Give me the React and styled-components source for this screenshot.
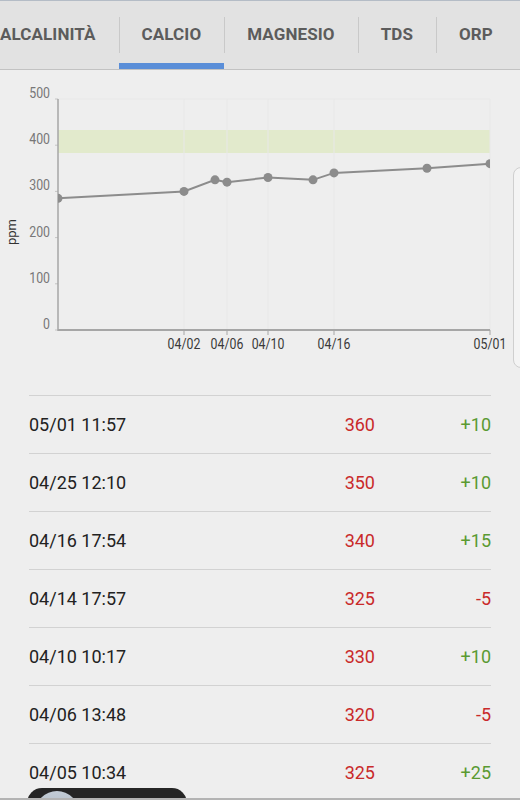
import React from "react";
import styled, { createGlobalStyle } from "styled-components";

const GlobalStyle = createGlobalStyle`
  html, body {
    margin: 0;
    padding: 0;
    overflow: hidden;
    background: #eeeeee;
    font-family: Roboto, "Liberation Sans", sans-serif;
  }
`;

const Screen = styled.div`
  position: relative;
  width: 520px;
  height: 800px;
  overflow: hidden;
  background: #eeeeee;
`;

const TabBar = styled.div`
  display: flex;
  height: 70px;
  box-sizing: border-box;
  background: #e2e2e2;
  border-top: 1px solid #b4bcc6;
  border-bottom: 1px solid #c2c2c2;
  overflow: hidden;
  margin-left: -23px;
`;

const Tab = styled.div`
  position: relative;
  flex: none;
  display: flex;
  align-items: center;
  justify-content: center;
  padding: 0 23px 2px;
  font-size: 17px;
  font-weight: 700;
  color: #5c5c5c;
  letter-spacing: 0.1px;

  &:not(:first-child)::before {
    content: "";
    position: absolute;
    left: 0;
    top: 16px;
    height: 36px;
    width: 1px;
    background: #c9c9c9;
  }

  &::after {
    content: "";
    position: absolute;
    left: 0;
    right: 0;
    bottom: 0;
    height: 6px;
    background: ${(p) => (p.$active ? "#5a8ed8" : "transparent")};
  }
`;

const ChartWrap = styled.div`
  height: 325px;
`;

const List = styled.div`
  padding: 0 29px;
`;

const Row = styled.div`
  display: grid;
  grid-template-columns: 1fr auto 116px;
  align-items: center;
  height: 57px;
  border-top: 1px solid #d2d2d2;
  font-size: 18px;
`;

const DateCell = styled.span`
  color: #222222;
`;

const Value = styled.span`
  color: #c92a2a;
  text-align: right;
`;

const Delta = styled.span`
  text-align: right;
  color: ${(p) => (p.$neg ? "#c92a2a" : "#5a9a32")};
`;

const ScrollHandle = styled.div`
  position: absolute;
  left: 513px;
  top: 167px;
  width: 20px;
  height: 199px;
  border: 1px solid #cfcfcf;
  border-radius: 8px;
  background: #f4f4f4;
`;

const Pill = styled.div`
  position: absolute;
  left: 27px;
  top: 788px;
  width: 160px;
  height: 30px;
  border-radius: 15px;
  background: #252525;
`;

const PillAvatar = styled.div`
  position: absolute;
  left: 8px;
  top: 3px;
  width: 44px;
  height: 44px;
  border-radius: 50%;
  background: linear-gradient(180deg, #c3ccd6, #9aa6b3);
`;

const BottomEdge = styled.div`
  position: absolute;
  left: 0;
  right: 0;
  top: 798px;
  height: 2px;
  background: #b3b3b3;
`;

const tabs = ["ALCALINITÀ", "CALCIO", "MAGNESIO", "TDS", "ORP"];

const rows = [
  ["05/01 11:57", "360", "+10"],
  ["04/25 12:10", "350", "+10"],
  ["04/16 17:54", "340", "+15"],
  ["04/14 17:57", "325", "-5"],
  ["04/10 10:17", "330", "+10"],
  ["04/06 13:48", "320", "-5"],
  ["04/05 10:34", "325", "+25"],
];

const X0 = 58;
const X1 = 490;
const yOf = (v) => 330 - v * 0.462;

const points = [
  [58, 285],
  [184, 300],
  [215, 325],
  [227, 320],
  [268, 330],
  [313, 325],
  [334, 340],
  [427, 350],
  [490, 360],
];

const xTicks = [
  [184, "04/02"],
  [227, "04/06"],
  [268, "04/10"],
  [334, "04/16"],
  [490, "05/01"],
];

const Chart = () => (
  <svg width="520" height="325" viewBox="0 70 520 325">
    <defs>
      <clipPath id="plot">
        <rect x={X0} y={95} width={X1 - X0} height={240} />
      </clipPath>
    </defs>
    <rect x={X0} y={130} width={X1 - X0} height={23} fill="#e2eacc" />
    <line x1={X0} y1={99} x2={X1} y2={99} stroke="#e8e8e8" strokeWidth="1" />
    {xTicks.map(([x]) => (
      <line key={x} x1={x} y1={99} x2={x} y2={330} stroke="#e8e8e8" strokeWidth="1" />
    ))}
    {[0, 100, 200, 300, 400, 500].map((v) => (
      <g key={v}>
        <line x1={55} y1={yOf(v)} x2={X0} y2={yOf(v)} stroke="#c4c4c4" strokeWidth="1" />
        <text
          x={50}
          y={yOf(v) - 1}
          textAnchor="end"
          fontFamily="Roboto, sans-serif"
          fontSize="14"
          fill="#777777"
          transform="translate(50 0) scale(0.88 1) translate(-50 0)"
        >
          {v}
        </text>
      </g>
    ))}
    <line x1={X0} y1={99} x2={X0} y2={331} stroke="#a6a6a6" strokeWidth="1.5" />
    <line x1={X0} y1={330} x2={X1} y2={330} stroke="#a6a6a6" strokeWidth="2" />
    {xTicks.map(([x, label]) => (
      <g key={label}>
        <line x1={x} y1={330} x2={x} y2={335} stroke="#a6a6a6" strokeWidth="1" />
        <text
          x={x}
          y={349}
          textAnchor="middle"
          fontFamily="Roboto, sans-serif"
          fontSize="14"
          fill="#3a3a3a"
          transform={`translate(${x} 0) scale(0.88 1) translate(${-x} 0)`}
        >
          {label}
        </text>
      </g>
    ))}
    <text
      x={12}
      y={232}
      textAnchor="middle"
      fontFamily="Roboto, sans-serif"
      fontSize="13"
      fill="#333333"
      transform="rotate(-90 12 232)"
      dy="4"
    >
      ppm
    </text>
    <g clipPath="url(#plot)">
      <polyline
        points={points.map(([x, v]) => `${x},${yOf(v)}`).join(" ")}
        fill="none"
        stroke="#8c8c8c"
        strokeWidth="2"
      />
      {points.map(([x, v]) => (
        <circle key={x} cx={x} cy={yOf(v)} r="4.5" fill="#8c8c8c" />
      ))}
    </g>
  </svg>
);

export default function App() {
  return (
    <Screen>
      <GlobalStyle />
      <TabBar>
        {tabs.map((t) => (
          <Tab key={t} $active={t === "CALCIO"}>
            {t}
          </Tab>
        ))}
      </TabBar>
      <ChartWrap>
        <Chart />
      </ChartWrap>
      <List>
        {rows.map(([d, v, delta]) => (
          <Row key={d}>
            <DateCell>{d}</DateCell>
            <Value>{v}</Value>
            <Delta $neg={delta.startsWith("-")}>{delta}</Delta>
          </Row>
        ))}
      </List>
      <ScrollHandle />
      <Pill>
        <PillAvatar />
      </Pill>
      <BottomEdge />
    </Screen>
  );
}
